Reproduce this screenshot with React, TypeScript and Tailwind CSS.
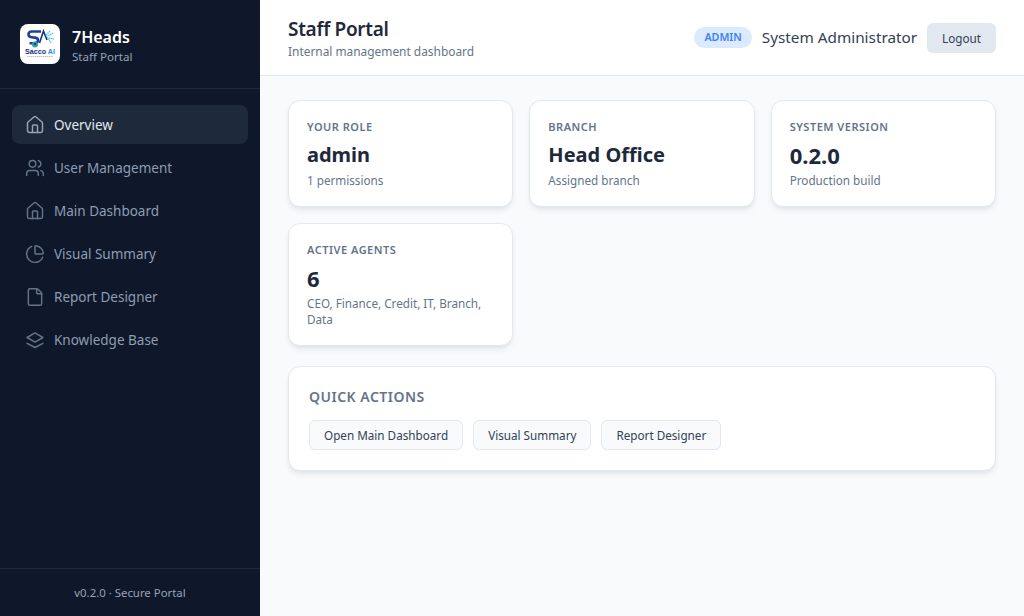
import { type ReactNode } from 'react'
import { File, House, PieChart, Users } from 'lucide-react'

const ICON_CLASS = 'h-5 w-5'
const ICON_STROKE = 1.75

function LayersIcon() {
  return (
    <svg viewBox="0 0 24 24" fill="none" stroke="currentColor" strokeWidth={ICON_STROKE} strokeLinecap="round" strokeLinejoin="round" className={ICON_CLASS}>
      <path d="M12 3.500 2.500 9l9.500 5.500L21.500 9z" />
      <path d="m2.500 16 9.500 5 9.500-5" />
    </svg>
  )
}

function Logo() {
  return (
    <div className="flex h-10 w-10 items-center justify-center rounded-lg bg-white">
      <svg viewBox="0 0 40 40" className="h-10 w-10">
        <path d="M21 7.500h-9.500c-2 0-3 1.200-3 2.800s1 2.700 3 2.900l3.500.4c2.200.3 3.200 1.600 3 3.100-.2 1.600-1.500 2.500-3.500 2.500H9.500" fill="none" stroke="#1f3f9e" strokeWidth={2.600} />
        <path d="M19.500 19 23.500 7l3.500 9" fill="none" stroke="#14307f" strokeWidth={1.600} />
        <path d="m26 11 4-4m-4 4 5 8m-3-7 5-3m-4 5 5 1" fill="none" stroke="#5cc0f0" strokeWidth={1.400} strokeDasharray="1.500 .6" />
        <circle cx="15" cy="20.500" r="3" fill="#2aa7a0" />
        <circle cx="15" cy="20" r="1.300" fill="#1f3f9e" />
        <text x="20" y="29.500" textAnchor="middle" fontFamily="'Liberation Sans', sans-serif" fontWeight={700} fontSize="7.200" fill="#16327f">
          Sacco <tspan fill="#2c8fe0">AI</tspan>
        </text>
        <path d="M7 32.500h26" stroke="#9aa7c0" strokeWidth={0.700} strokeDasharray="1.500 .5" />
      </svg>
    </div>
  )
}

const NAV: { label: string; icon: ReactNode; active?: boolean }[] = [
  { label: 'Overview', icon: <House className={ICON_CLASS} strokeWidth={ICON_STROKE} />, active: true },
  { label: 'User Management', icon: <Users className={ICON_CLASS} strokeWidth={ICON_STROKE} /> },
  { label: 'Main Dashboard', icon: <House className={ICON_CLASS} strokeWidth={ICON_STROKE} /> },
  { label: 'Visual Summary', icon: <PieChart className={ICON_CLASS} strokeWidth={ICON_STROKE} /> },
  { label: 'Report Designer', icon: <File className={ICON_CLASS} strokeWidth={ICON_STROKE} /> },
  { label: 'Knowledge Base', icon: <LayersIcon /> },
]

const CARD_CLASS =
  'rounded-xl border border-[#e2e8f0] bg-white shadow-[0_4px_6px_-1px_rgba(15,23,42,0.08),0_2px_4px_-2px_rgba(15,23,42,0.06)]'

type StatCardProps = {
  label: string
  value: string
  note: string
  numeric?: boolean
}

function StatCard({ label, value, note, numeric }: StatCardProps) {
  return (
    <div className={`${CARD_CLASS} px-[18px] pt-[18px] pb-[18px]`}>
      <p className="text-[11px] leading-[15px] font-semibold tracking-[0.5px] text-[#64748b] uppercase">{label}</p>
      <p className={`mt-[7px] leading-7 font-bold text-[#1e293b] ${numeric ? 'text-[22px]' : 'text-[20px]'}`}>{value}</p>
      <p className="mt-[3px] text-[11.700px] leading-4 text-[#64748b]">{note}</p>
    </div>
  )
}

export default function App() {
  return (
    <div className="flex h-[616px] w-[1024px] overflow-hidden bg-[#f8fafc] font-['Noto_Sans',sans-serif]">
      <aside className="flex w-[260px] flex-col bg-[#0f172a]">
        <div className="flex h-[89px] items-center gap-3 border-b border-[#1e293b] px-5">
          <Logo />
          <div className="pt-[2px]">
            <p className="text-base leading-[24px] font-semibold text-white">7Heads</p>
            <p className="text-[11.600px] leading-4 text-[#94a3b8]">Staff Portal</p>
          </div>
        </div>
        <nav className="flex flex-1 flex-col gap-[4px] px-3 py-4">
          {NAV.map((item) => (
            <div
              key={item.label}
              className={`flex h-[39px] items-center gap-[9px] rounded-lg px-[13px] pt-px text-[13.500px] ${
                item.active ? 'bg-[#1e293b] text-[#e2e8f0]' : 'text-[#8e9db2]'
              }`}
            >
              <span className={item.active ? 'text-[#94a3b8]' : 'text-[#64748b]'}>{item.icon}</span>
              {item.label}
            </div>
          ))}
        </nav>
        <div className="flex h-[48px] items-center justify-center border-t border-[#1e293b] text-[11.400px] text-[#94a3b8]">
          v0.2.0 · Secure Portal
        </div>
      </aside>
      <div className="flex flex-1 flex-col">
        <header className="flex h-[76px] items-center justify-between border-b border-[#e2e8f0] bg-white px-7">
          <div>
            <h1 className="text-[19px] leading-[25px] font-semibold tracking-[-0.3px] text-[#1e293b]">Staff Portal</h1>
            <p className="mt-px text-[11.900px] leading-4 text-[#64748b]">Internal management dashboard</p>
          </div>
          <div className="flex items-center gap-[10px]">
            <span className="rounded-full bg-[#dbeafe] px-[10px] py-[2px] text-[10.700px] leading-[17px] font-semibold text-[#3b82f6]">ADMIN</span>
            <span className="text-[15.300px] text-[#334155]">System Administrator</span>
            <button className="rounded-md bg-[#e2e8f0] px-[15px] py-[7px] text-[11.700px] leading-4 text-[#334155]">Logout</button>
          </div>
        </header>
        <main className="flex flex-col gap-5 px-7 py-6">
          <div className="grid grid-cols-3 gap-4">
            <StatCard label="Your Role" value="admin" note="1 permissions" />
            <StatCard label="Branch" value="Head Office" note="Assigned branch" />
            <StatCard label="System Version" value="0.2.0" note="Production build" numeric />
            <StatCard label="Active Agents" value="6" note="CEO, Finance, Credit, IT, Branch, Data" numeric />
          </div>
          <section className={`${CARD_CLASS} px-5 pt-5 pb-5`}>
            <h2 className="text-sm leading-5 font-semibold tracking-[0.5px] text-[#64748b] uppercase">Quick Actions</h2>
            <div className="mt-[13px] flex gap-[10px]">
              {['Open Main Dashboard', 'Visual Summary', 'Report Designer'].map((label) => (
                <button key={label} className="rounded-md border border-[#e2e8f0] bg-[#f8fafc] px-[14px] py-[6px] text-[11.700px] leading-4 text-[#334155]">
                  {label}
                </button>
              ))}
            </div>
          </section>
        </main>
      </div>
    </div>
  )
}
